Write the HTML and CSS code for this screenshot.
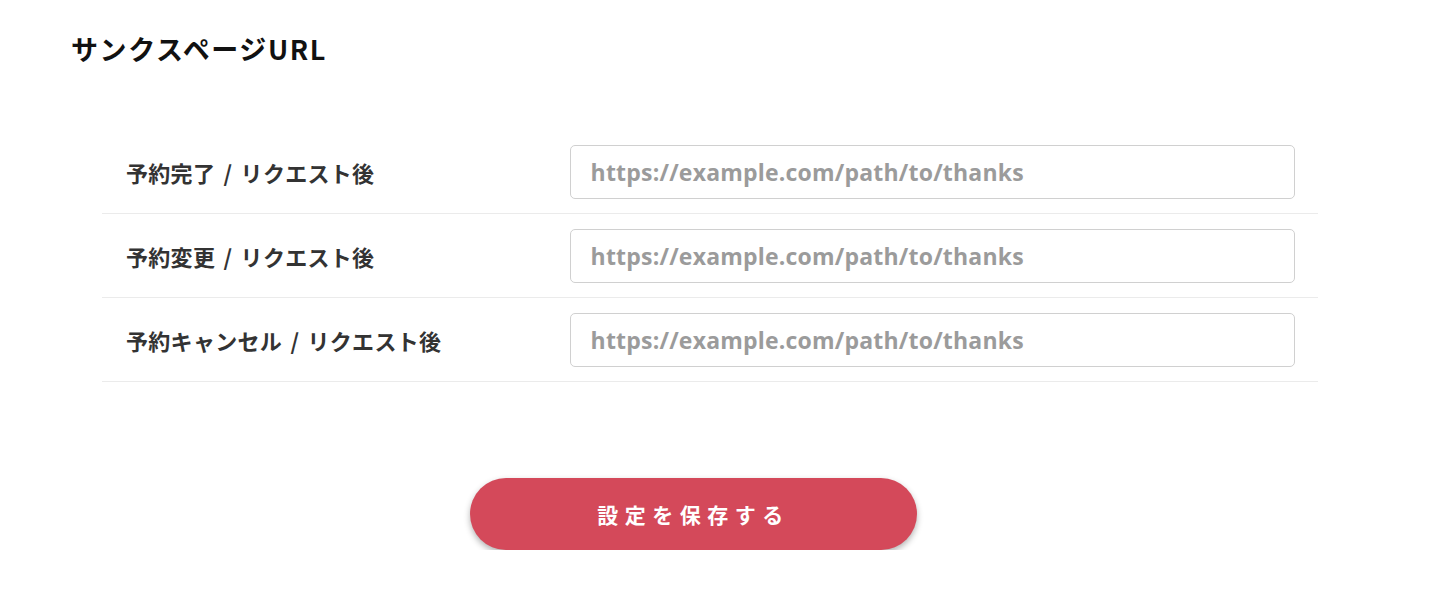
FILE: index.html
```html
<!DOCTYPE html>
<html lang="ja">
<head>
<meta charset="utf-8">
<link rel="stylesheet" href="styles.css">
</head>
<body>
<main class="page">
  <h2 class="title">サンクスページURL</h2>
  <div class="rows">
    <div class="row">
      <label class="label">予約完了 / リクエスト後</label>
      <input class="url" type="text" placeholder="https://example.com/path/to/thanks">
    </div>
    <div class="row">
      <label class="label">予約変更 / リクエスト後</label>
      <input class="url" type="text" placeholder="https://example.com/path/to/thanks">
    </div>
    <div class="row">
      <label class="label">予約キャンセル / リクエスト後</label>
      <input class="url" type="text" placeholder="https://example.com/path/to/thanks">
    </div>
  </div>
  <div class="actions">
    <button class="save" type="button">設定を保存する</button>
  </div>
</main>
</body>
</html>
```
FILE: styles.css
```css
* { box-sizing: border-box; }
html, body { margin: 0; padding: 0; background: #fff; }
body {
  font-family: "Noto Sans CJK JP", "Noto Sans", sans-serif;
  color: #333;
}
.page {
  padding: 29px 0 0 71px;
  width: 1432px;
}
.title {
  margin: 0;
  font-size: 27px;
  font-weight: 700;
  color: #111;
  line-height: 40px;
  letter-spacing: 1.6px;
}
.rows {
  margin: 61px 0 0 31px;
  width: 1216px;
}
.row {
  display: flex;
  align-items: center;
  height: 84px;
  border-bottom: 1px solid #ebebeb;
  padding: 0 23px 0 24px;
}
.label {
  width: 444px;
  font-size: 22px;
  font-weight: 700;
  color: #333;
  letter-spacing: 0.3px;
  word-spacing: 3px;
}
.url {
  width: 726px;
  height: 54px;
  border: 1px solid #d0d0d0;
  border-radius: 5px;
  padding: 0 20px;
  font-family: "Open Sans", sans-serif;
  font-size: 23px;
  font-weight: 700;
  letter-spacing: 0.2px;
  color: #333;
  outline: none;
}
.url::placeholder { color: #9b9b9b; }
.actions {
  display: flex;
  padding: 96px 0 0 399px;
}
.save {
  width: 447px;
  height: 72px;
  border: none;
  border-radius: 36px;
  background: #d4495a;
  color: #fff;
  font-family: "Noto Sans CJK JP", sans-serif;
  font-size: 21px;
  font-weight: 700;
  letter-spacing: 6.5px;
  padding-left: 6px;
  box-shadow: 0 3px 6px rgba(0,0,0,0.3);
}
```
